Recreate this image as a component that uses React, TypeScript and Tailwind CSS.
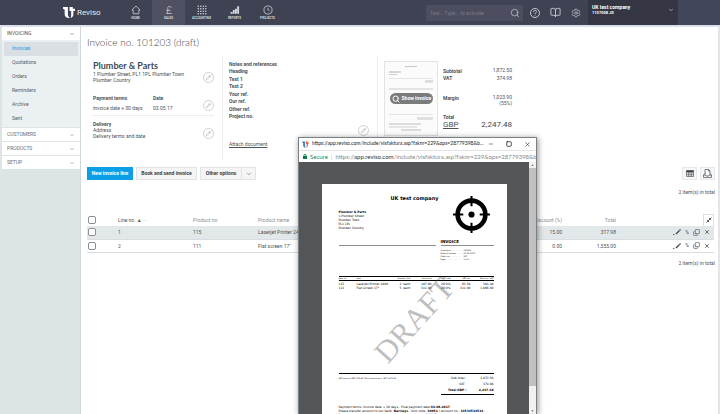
import { BookOpen, ChevronDown, Copy, Minus, Pencil, Search, Settings, Square, X } from "lucide-react";
import type { ReactNode } from "react";

const SIDE_ITEMS = ["Invoices", "Quotations", "Orders", "Reminders", "Archive", "Sent"];
const SIDE_GROUPS = ["CUSTOMERS", "PRODUCTS", "SETUP"];
const REFERENCES = ["Heading", "Text 1", "Text 2", "Your ref.", "Our ref.", "Other ref.", "Project no."];

const LINES = [
  { no: "1", product: "115", name: "Laserjet Printer 2400", discount: "15.00", total: "317.98" },
  { no: "2", product: "111", name: "Flat screen 17\"", discount: "0.00", total: "1,555.00" },
];

const PDF_LINES = [
  ["115", "LaserJet Printer 2400", "2", "each", "187.00", "20.0%", "63.58", "381.48"],
  ["111", "Flat screen 17\"", "5", "each", "311.00", "20.0%", "311.00", "1,866.00"],
];

const PDF_META = [
  ["Invoice no. ............ :", "101203"],
  ["Date of invoice ...... :", "03.05.2017"],
  ["Client no. ............ :", "227"],
  ["Page .................. :", "1 of 1"],
];

const NAV: { label: string; icon: ReactNode; active?: boolean }[] = [
  { label: "HOME", icon: <path d="M3.500 8H1.500L8 1.500 14.500 8h-2v6h-9z" /> },
  { label: "SALES", icon: <path d="M12 4.500C11 1.500 6 1.500 6 5c0 3 1 6-2 8.500h8.500M3.500 8.500h7" />, active: true },
  {
    label: "ACCOUNTING",
    icon: (
      <g fill="currentColor" stroke="none">
        {[2, 6, 10, 14].map((x) => [2, 6, 10, 14].map((y) => <circle key={`${x}-${y}`} cx={x} cy={y} r="1.2" />))}
      </g>
    ),
  },
  {
    label: "REPORTS",
    icon: <path fill="currentColor" stroke="none" d="M1 11h3v3H1zM4.500 8h3v6h-3zM8 6h3v8H8zM11.500 2h3v12h-3z" />,
  },
  { label: "PROJECTS", icon: <path d="M8 1.500a6.500 6.500 0 1 0 0 13 6.500 6.500 0 0 0 0-13ZM8 4.500V8l2.500 1.500" /> },
];

function Logo({ className, left, right }: { className: string; left: string; right: string }) {
  return (
    <svg viewBox="0 0 24 24" className={className} aria-hidden="true">
      <path fill={left} d="M1 2h9v13c0 3 1 5 4 7C8 23 4 20 4 15V7L1 5z" />
      <path fill={right} d="M13 2h6v3h4v4h-3v7c0 3-2 5-5 6 1-2 1-4 1-6V9h-3z" />
    </svg>
  );
}

function EditButton({ label }: { label: string }) {
  return (
    <button
      aria-label={label}
      className="flex size-[11px] shrink-0 items-center justify-center rounded-full border border-[#cdd0d3] bg-white text-[#8d9297]"
    >
      <Pencil size={5} />
    </button>
  );
}

function Header() {
  return (
    <header className="flex h-[27px] items-stretch border-b-2 border-[#dddeeb] bg-[#3f4252] text-[#d6d7de]">
      <a href="#" className="ml-[62px] flex w-[57px] items-center gap-px text-[8px] leading-none text-[#e8e9ee]">
        <Logo className="h-[13px] w-[14px]" left="#ffffff" right="#ffffff" />
        Reviso
      </a>
      <nav className="flex">
        {NAV.map((n) => (
          <a
            key={n.label}
            href="#"
            className={`flex w-[33px] flex-col items-center pt-[5px] ${n.active ? "bg-[#4f5062]" : ""}`}
          >
            <svg viewBox="0 0 16 16" className="size-[10px]" fill="none" stroke="currentColor" strokeWidth="1.200" aria-hidden="true">
              {n.icon}
            </svg>
            <span className="mt-px text-[3px] leading-[5px] font-bold">{n.label}</span>
          </a>
        ))}
      </nav>
      <div className="ml-auto flex items-center">
        <label className="flex h-[16px] w-[97px] items-center bg-[#4c4e5f] pr-[3px] pl-1">
          <input
            type="text"
            aria-label="Search"
            placeholder="Text... Type... to activate"
            className="min-w-0 flex-1 text-[5px] leading-none outline-none placeholder:text-[#77798a]"
          />
          <Search size={10} strokeWidth={1.5} />
        </label>
        <div className="flex items-center gap-[10px] pr-[7px] pl-[7px]">
          <svg viewBox="0 0 20 20" className="size-[10px]" fill="none" stroke="currentColor" strokeWidth="1.800" aria-label="Help">
            <circle cx="10" cy="10" r="9" />
            <path d="M7 8c0-4 6-4 6-.5C13 9.500 10 9.500 10 12m0 1.500V15" />
          </svg>
          <BookOpen size={11} strokeWidth={1.8} />
          <Settings size={10} strokeWidth={1.5} />
        </div>
      </div>
      <button className="flex w-[90px] items-start justify-between bg-[#343743] px-1 pt-[4px] text-left text-white">
        <span className="text-[5px] leading-[6px] font-bold">
          UK test company
          <span className="block text-[4px]">1107008 JS</span>
        </span>
        <ChevronDown size={6} className="mt-[3px]" />
      </button>
      <div className="w-[42px] bg-[#414559]" />
    </header>
  );
}

function Sidebar() {
  return (
    <aside className="w-[81px] shrink-0 border-r border-[#cfd8da] bg-[#dde4e6] pl-[2px] text-[5px] text-[#686e73]">
      <section className="bg-[#ebf0f2] pb-px">
        <button className="flex h-[13px] w-full items-center justify-between bg-white px-[5px] text-[#4c5257]">
          INVOICING
          <ChevronDown size={6} />
        </button>
        <ul className="px-[2px] pt-[2px]">
          {SIDE_ITEMS.map((item, i) => (
            <li key={item}>
              <a
                href="#"
                className={`flex h-[14px] items-center pl-2 ${i === 0 ? "bg-[#d9dfe2] text-[#2794ea]" : "text-[#565d62]"}`}
              >
                {item}
              </a>
            </li>
          ))}
        </ul>
      </section>
      {SIDE_GROUPS.map((g) => (
        <button key={g} className="mt-px flex h-[13px] w-full items-center justify-between bg-white px-[5px]">
          {g}
          <ChevronDown size={6} />
        </button>
      ))}
    </aside>
  );
}

function CustomerInfo() {
  return (
    <section className="flex flex-col border-r border-[#eceeef] pr-2 pl-3 text-[5px] leading-[6px]">
      <div className="flex h-[36px] items-start justify-between pt-[5px]">
        <div>
          <h2 className="font-[Lato,sans-serif] text-[9px] leading-[10px] font-bold text-[#3e4953]">Plumber &amp; Parts</h2>
          <p className="w-24">1 Plumber Street, PL1 1PL Plumber Town Plumber Country</p>
        </div>
        <div className="-ml-3 pt-[11px]">
          <EditButton label="Edit customer" />
        </div>
      </div>
      <div className="flex h-[24px] items-end justify-between border-b border-[#eceeef] pb-1">
        <dl className="grid grid-cols-[60px_auto] gap-y-1">
          <dt className="font-bold">Payment terms</dt>
          <dt className="font-bold">Date</dt>
          <dd>Invoice date + 30 days</dd>
          <dd>03.05.17</dd>
        </dl>
        <EditButton label="Edit terms" />
      </div>
      <div className="mt-[5px] flex items-end justify-between">
        <div>
          <h3 className="font-bold">Delivery</h3>
          <p>Address</p>
          <p>Delivery terms and date</p>
        </div>
        <EditButton label="Edit delivery" />
      </div>
    </section>
  );
}

function InvoicePreview() {
  return (
    <div className="flex h-[75px] w-[54px] flex-col items-center border border-[#e2e3e4] bg-[#fbfbfb] px-1 pt-[4px]">
      <div className="h-px w-3 bg-[#c6c6c6]" />
      <div className="mt-[4px] h-[2px] w-3 self-start bg-[#d6d6d6]" />
      <div className="mt-px h-px w-2 self-start bg-[#cfcfcf]" />
      <div className="mt-[3px] h-px w-full bg-[#e4e4e4]" />
      <div className="mt-px h-[3px] w-2 self-end bg-[#dedede]" />
      <div className="mt-[5px] h-[2px] w-full bg-[#e4e4e4]" />
      <button className="mt-[3px] flex h-[11px] w-[43px] items-center gap-[2px] rounded-full bg-[#7b7b7b] pl-[2px] text-[5px] font-bold whitespace-nowrap text-white">
        <Search size={8} strokeWidth={3} className="shrink-0" />
        Show invoice
      </button>
      <div className="mt-[10px] h-px w-full bg-[#e4e4e4]" />
      <div className="mt-[2px] h-[3px] w-4 self-end bg-[#e0e0e0]" />
      <div className="mt-[3px] h-[2px] w-8 self-start bg-[#dcdcdc]" />
      <div className="mt-px h-[2px] w-7 self-start bg-[#e4e4e4]" />
      <div className="mt-px h-[2px] w-5 bg-[#dadada]" />
    </div>
  );
}

function LinesTable() {
  return (
    <table className="w-full table-fixed border-collapse text-[5px] leading-[6px]">
      <colgroup>
        <col className="w-[31px]" />
        <col className="w-[75px]" />
        <col className="w-[65px]" />
        <col />
        <col className="w-[70px]" />
        <col className="w-[54px]" />
        <col className="w-[98px]" />
      </colgroup>
      <thead>
        <tr className="h-[13px] text-[#8a9095]">
          <th className="text-left">
            <input type="checkbox" aria-label="Select all lines" className="ml-px block size-[8px] appearance-none rounded-[2px] border border-[#8b8f93] bg-white" />
          </th>
          <th className="text-left font-normal text-[#4f565b]">Line no. ▲ <span className="text-[#9a9fa3]">···</span></th>
          <th className="text-left font-normal">Product no</th>
          <th className="text-left font-normal">Product name</th>
          <th className="text-right font-normal">Discount (%)</th>
          <th className="text-right font-normal">Total</th>
          <th>
            <button aria-label="Collapse columns" className="ml-auto flex h-[12px] w-[11px] items-center justify-center border border-b-0 border-[#dcdfe1] text-[#333]">
              <svg viewBox="0 0 12 12" className="size-[6px]" fill="none" stroke="currentColor" strokeWidth="1.500" aria-hidden="true">
                <path d="M11 1 7 5M7 2v3h3M1 11l4-4M2 7h3v3" />
              </svg>
            </button>
          </th>
        </tr>
      </thead>
      <tbody>
        {LINES.map((l, i) => (
          <tr key={l.no} className={`h-[13px] border-b border-[#d9dddf] ${i === 0 ? "bg-[#e2e8ea]" : ""}`}>
            <td>
              <input type="checkbox" aria-label={`Select line ${l.no}`} className="ml-px block size-[8px] appearance-none rounded-[2px] border border-[#8b8f93] bg-white" />
            </td>
            <td>{l.no}</td>
            <td>{l.product}</td>
            <td>{l.name}</td>
            <td className="text-right">{l.discount}</td>
            <td className="text-right">{l.total}</td>
            <td>
              <div className="flex items-center justify-end gap-[4px] pr-1 text-[#3c4146]">
                <button aria-label="Edit line">
                  <svg viewBox="0 0 16 12" className="h-[6px] w-[8px]" fill="none" stroke="currentColor" aria-hidden="true">
                    <path d="M0 11h3" strokeWidth="1.500" />
                    <path d="m6 10 7-7" strokeWidth="2.500" />
                    <path d="m13.500 2.500 1.500-1.500" strokeWidth="3" />
                  </svg>
                </button>
                <button aria-label="Line discount" className="text-[5px] leading-none">%</button>
                <button aria-label="Copy line"><Copy size={7} className="-scale-y-100" /></button>
                <button aria-label="Delete line"><X size={6} strokeWidth={3} /></button>
              </div>
            </td>
          </tr>
        ))}
      </tbody>
    </table>
  );
}

function PdfPage() {
  return (
    <article className="relative mx-auto mt-[22px] w-[185px] bg-white pt-[11px] pr-[13px] pb-8 pl-[17px] font-['DejaVu_Sans',sans-serif] text-[3px] leading-[4px] text-black">
      <div className="grid h-[47px] grid-cols-[52px_1fr_auto]">
        <div className="pt-[15px]">
          <p className="font-bold">Plumber &amp; Parts</p>
          <p>1 Plumber Street</p>
          <p>Plumber Town</p>
          <p>PL1 1PL</p>
          <p>Plumber Country</p>
        </div>
        <h2 className="text-[5px] leading-[6px] font-bold">UK test company</h2>
        <svg viewBox="0 0 36 36" className="mt-px mr-[4px] size-[37px]" stroke="#000" fill="none" aria-hidden="true">
          <circle cx="18" cy="18" r="13.500" strokeWidth="4.500" />
          <path d="M18 0v10M18 26v10M0 18h10M26 18h10" strokeWidth="2" />
          <circle cx="18" cy="18" r="2.500" fill="#000" />
        </svg>
      </div>
      <div className="grid grid-cols-[97px_1fr] items-start gap-[5px] leading-[3px]">
        <div className="mt-[3px] border-t border-[#8e8e8e]" />
        <div>
          <h3 className="-mt-[3px] border-b border-[#8e8e8e] pb-px text-[4px] leading-[5px] font-bold">INVOICE</h3>
          <dl className="mt-[3px] grid grid-cols-[23px_auto] text-[2px]">
            {PDF_META.map(([k, v]) => (
              <div key={k} className="contents">
                <dt className="whitespace-nowrap">{k}</dt>
                <dd>{v}</dd>
              </div>
            ))}
          </dl>
        </div>
      </div>
      <table className="mt-[15px] w-full table-fixed text-right">
        <colgroup>
          <col className="w-[18px]" />
          <col className="w-[38px]" />
          <col className="w-[7px]" />
          <col className="w-[9px]" />
          <col className="w-[21px]" />
          <col className="w-[19px]" />
          <col className="w-[20px]" />
          <col />
        </colgroup>
        <thead>
          <tr className="border-y border-black text-[2px] leading-[3px]">
            <th className="text-left font-normal">Item no.</th>
            <th className="text-left font-normal">Item</th>
            <th className="font-normal" colSpan={2}>Quantity Unit</th>
            <th className="font-normal">Unit price</th>
            <th className="font-normal">VAT rate</th>
            <th className="font-normal">VAT am.</th>
            <th className="font-normal">Total incl. VAT</th>
          </tr>
        </thead>
        <tbody>
          {PDF_LINES.map((row, r) => (
            <tr key={row[0]}>
              {row.map((cell, i) => (
                <td key={i} className={`whitespace-nowrap ${i < 2 ? "text-left" : ""} ${r === 0 ? "pt-px" : ""}`}>
                  {cell}
                </td>
              ))}
            </tr>
          ))}
        </tbody>
      </table>
      <div className="mt-[83px] flex items-start justify-between border-t border-black pt-[2px]">
        <p className="text-[2px]">VAT amount GBP 374.98. Total amount excl. VAT 1,872.50</p>
        <dl className="grid w-[53px] grid-cols-[26px_1fr] gap-y-[2px] border-b border-black pb-[2px] text-right">
          <dt>Sub total :</dt>
          <dd>1,872.50</dd>
          <dt>VAT :</dt>
          <dd>374.98</dd>
          <dt className="font-bold">Total GBP :</dt>
          <dd className="font-bold">2,247.48</dd>
        </dl>
      </div>
      <p className="mt-[10px] whitespace-nowrap">
        Payment terms: Invoice date + 30 days - Final payment date <b>02.06.2017</b>
      </p>
      <p className="whitespace-nowrap">
        Please transfer amount to our bank: <b>Barclays</b> - Sort code: <b>30951</b> / Account no.: <b>34534534534</b>
      </p>
      <p className="whitespace-nowrap">Please state customer no. and invoice no. with payment: <b>101203</b></p>
      {/* watermark */}
      <span className="absolute top-[136px] left-1/2 -translate-x-1/2 -translate-y-1/2 -rotate-48 font-['Liberation_Serif',serif] text-[31px] leading-none text-[#555]/40">
        DRAFT
      </span>
    </article>
  );
}

function PopupWindow() {
  return (
    <div className="absolute top-[137px] bottom-0 left-[298px] flex w-[239px] flex-col border border-b-0 border-[#7c8083] bg-white font-[Lato,sans-serif] shadow-[1px_1px_6px_rgba(0,0,0,0.45)]">
      <div className="flex h-[12px] shrink-0 items-center gap-[3px] pl-[3px] text-[5px] text-[#222]">
        <Logo className="size-[7px] shrink-0" left="#2a7fd0" right="#e2562f" />
        <span className="min-w-0 flex-1 truncate">https://app.reviso.com/include/visfaktura.asp?faknr=229&amp;ops=28779398&amp;bogf=...</span>
        <div className="flex items-center gap-[12px] pr-[5px]">
          <button aria-label="Minimise"><Minus size={6} /></button>
          <button aria-label="Maximise"><Square size={6} strokeWidth={3} /></button>
          <button aria-label="Close"><X size={7} /></button>
        </div>
      </div>
      <div className="flex h-[12px] shrink-0 items-center gap-[3px] overflow-hidden border-t border-[#e3e3e3] pl-[4px] text-[6px] whitespace-nowrap text-[#888]">
        <svg viewBox="0 0 8 10" className="h-[5px] w-[4px] shrink-0" aria-hidden="true">
          <path fill="#0b7a4b" d="M0 4h8v6H0z" />
          <path fill="none" stroke="#0b7a4b" strokeWidth="1.500" d="M2 4V1h4v3" />
        </svg>
        <span className="text-[#14835a]">Secure</span>
        <span className="text-[#bbb]">|</span>
        <span>
          https://<span className="text-[#333]">app.reviso.com</span>/include/visfaktura.asp?faknr=229&amp;ops=28779398&amp;bogf=0&amp;
        </span>
      </div>
      <div className="flex min-h-0 flex-1 overflow-hidden bg-[#525659]">
        <div className="min-w-0 flex-1">
          <PdfPage />
        </div>
        <div className="flex w-[7px] flex-col bg-[#f1f1f1] text-center text-[3px] leading-[6px] text-[#555]">
          <span>▲</span>
          <div className="min-h-0 flex-1 bg-[#c1c1c1]" />
          <span className="h-[28px] pt-[22px] leading-[6px]">▼</span>
        </div>
      </div>
    </div>
  );
}

export default function App() {
  return (
    <div className="relative flex h-screen flex-col overflow-hidden bg-white font-[Roboto,sans-serif] text-[#4b5359]">
      <Header />
      <div className="flex min-h-0 flex-1">
        <Sidebar />
        <main className="min-w-0 flex-1 border-r-2 border-[#e4e4ec]">
          <h1 className="pt-2 pl-[6px] font-[Lato,sans-serif] text-[10px] leading-[14px] font-light text-[#3f464b]">
            Invoice no. 101203 (draft)
          </h1>
          <div className="mt-[7px] grid h-[104px] grid-cols-[142px_155px_1fr]">
            <CustomerInfo />
            <section className="flex justify-between border-r border-[#eceeef] pr-2 pl-[6px] text-[5px]">
              <div className="pt-[5px] leading-[7px] font-bold">
                <h3>Notes and references</h3>
                <ul className="flex h-[52px] flex-col justify-between">
                  {REFERENCES.map((r) => (
                    <li key={r}>{r}</li>
                  ))}
                </ul>
                <a href="#" className="mt-[21px] block font-normal underline">Attach document</a>
              </div>
              <div className="pt-[69px]">
                <EditButton label="Edit references" />
              </div>
            </section>
            <section className="flex gap-[5px] pt-[5px] pl-[6px] text-[5px]">
              <InvoicePreview />
              <dl className="grid w-[69px] grid-cols-2 content-start pt-[6px] leading-[6px] [&>dd]:text-right">
                <dt className="pt-px font-bold">Subtotal</dt>
                <dd>1,872.50</dd>
                <dt className="pt-px font-bold">VAT</dt>
                <dd className="pt-px">374.98</dd>
                <dt className="mt-[14px] font-bold">Margin</dt>
                <dd className="mt-[13px]">1,023.90<br />(55%)</dd>
                <dt className="mt-2 font-bold">
                  Total
                  <a href="#" className="block text-[8px] leading-[9px] font-normal underline">GBP</a>
                </dt>
                <dd className="mt-2 self-end text-[8px] leading-[9px] text-[#3e4953]">2,247.48</dd>
              </dl>
            </section>
          </div>
          <div className="mt-[7px] flex items-center gap-[3px] pr-[3px] pl-[6px] text-[5px] font-bold text-[#3c4247]">
            <button className="h-[13px] w-[46px] bg-[#0c9ee6] text-white">New invoice line</button>
            <button className="h-[13px] w-[61px] border border-[#e2e3e4] bg-[#f5f5f5]">Book and send invoice</button>
            <div className="flex h-[13px] w-[56px] border border-[#e2e3e4] bg-[#f5f5f5]">
              <button className="flex-1">Other options</button>
              <button aria-label="More options" className="flex w-[14px] items-center justify-center border-l border-[#e2e3e4]">
                <ChevronDown size={6} />
              </button>
            </div>
            <button aria-label="Table view" className="ml-auto flex h-[13px] w-[15px] items-center justify-center border border-[#e6e8ea] bg-[#f7f7f7]">
              <svg viewBox="0 0 16 14" className="h-[7px] w-[8px]" fill="none" stroke="currentColor" strokeWidth="1.200" aria-hidden="true">
                <path d="M1 1h14v12H1zM1 5.500h14M1 9.500h14M5.500 4v9M10.500 4v9" />
                <path d="M1 2.500h14" strokeWidth="3" />
              </svg>
            </button>
            <button aria-label="Print" className="flex h-[13px] w-[15px] items-center justify-center border border-[#e6e8ea] bg-[#f7f7f7]">
              <svg viewBox="0 0 18 18" className="size-[9px]" fill="none" stroke="currentColor" strokeWidth="1.300" aria-hidden="true">
                <path d="M4 11V1h7l3 3v7M11 1v3h3" />
                <path d="M4 9 1 12v5h16v-5l-3-3M1 12h4l1 2h6l1-2h4" />
              </svg>
            </button>
          </div>
          <p className="mt-[9px] pr-[3px] text-right text-[5px] leading-[6px]">2 item(s) in total</p>
          <div className="mt-[18px] pr-1 pl-[6px]">
            <LinesTable />
          </div>
          <p className="mt-[7px] pr-[3px] text-right text-[5px] leading-[6px]">2 item(s) in total</p>
        </main>
      </div>
      <PopupWindow />
    </div>
  );
}
